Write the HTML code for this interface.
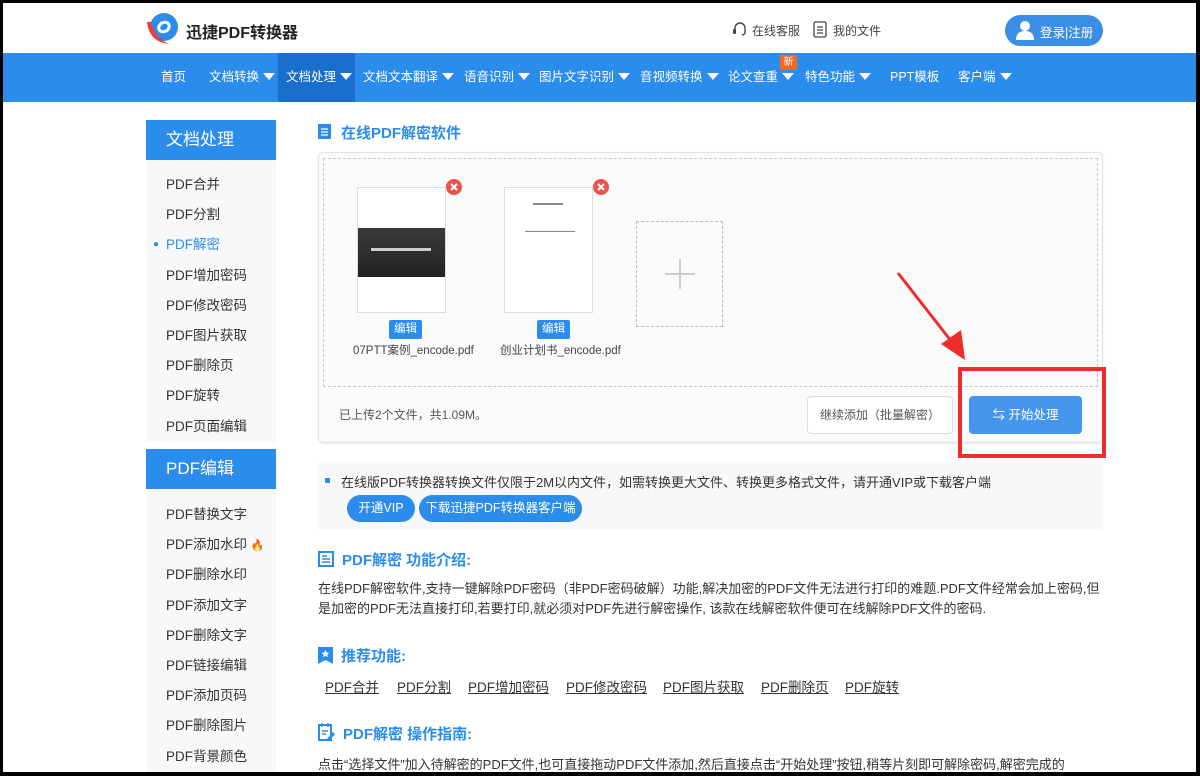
<!DOCTYPE html>
<html><head><meta charset="utf-8">
<style>
*{margin:0;padding:0;box-sizing:border-box}
body{width:1200px;height:776px;overflow:hidden;background:#000;font-family:"Liberation Sans","Noto Sans CJK SC",sans-serif;font-size:13px;color:#333;position:relative}
.page{position:absolute;left:3px;top:3px;width:1193px;height:769px;background:#fff;overflow:hidden}
.abs{position:absolute}
.nav{position:absolute;left:0;top:50px;width:1193px;height:49px;background:#2b8ceb}
.nav span{position:absolute;top:0;height:49px;line-height:49px;color:#fff;font-size:12.5px;white-space:nowrap}
.tri{display:inline-block;width:0;height:0;border-left:6px solid transparent;border-right:6px solid transparent;border-top:7px solid #fff;margin-left:4px;vertical-align:1px}
.side{position:absolute;left:143px;width:130px;background:#f7f8fa}
.sh{height:40px;line-height:40px;background:#2b8ceb;color:#fff;font-size:17px;padding-left:20px}
.si{height:30.2px;line-height:30px;padding-left:20px;font-size:13.5px;color:#333}
.blue{color:#2b8ceb}
.h{position:absolute;font-size:15px;font-weight:bold;color:#2b8ceb}
.p{position:absolute;left:315px;font-size:13px;color:#333;line-height:20px}
.lk{position:absolute;top:673px;font-size:13.5px;color:#333;text-decoration:underline}
.btn{position:absolute;background:#2b8ceb;color:#fff;border-radius:14px;height:27px;line-height:27px;text-align:center;font-size:12.5px}
</style></head><body>
<div class="page">
<svg class="abs" style="left:142px;top:9px" width="36" height="36" viewBox="0 0 36 36"><circle cx="19" cy="15" r="14" fill="#2b8ceb"/><ellipse cx="19" cy="15" rx="7" ry="6" fill="#fff" transform="rotate(-30 19 15)"/><ellipse cx="19" cy="15" rx="4" ry="3" fill="#2b8ceb" transform="rotate(-30 19 15)"/><path d="M2 10 Q4 30 24 32 Q10 26 6 10Z" fill="#e8413a"/></svg>
<div class="abs" style="left:183px;top:16px;font-size:16px;font-weight:bold;color:#222">迅捷PDF转换器</div>
<svg class="abs" style="left:729px;top:18px" width="16" height="18" viewBox="0 0 16 18"><path d="M3 9 V7 a5 5 0 0 1 10 0 V11 a3 3 0 0 1 -3 3" fill="none" stroke="#444" stroke-width="1.4"/><rect x="1" y="8" width="3" height="5" rx="1" fill="#444"/></svg>
<div class="abs" style="left:749px;top:19px;font-size:12px;color:#444">在线客服</div>
<svg class="abs" style="left:810px;top:18px" width="14" height="17" viewBox="0 0 14 17"><rect x="1" y="1" width="12" height="15" rx="1.5" fill="none" stroke="#444" stroke-width="1.3"/><path d="M4 6h6M4 9h6M4 12h6" stroke="#444" stroke-width="1.2"/></svg>
<div class="abs" style="left:830px;top:19px;font-size:12px;color:#444">我的文件</div>
<div class="abs" style="left:1002px;top:12px;width:98px;height:31px;border-radius:16px;background:#3a8ee6"></div>
<svg class="abs" style="left:1013px;top:17px" width="18" height="20" viewBox="0 0 18 20"><circle cx="9" cy="6" r="5" fill="#fff"/><path d="M0 20 Q0 11 9 11 Q18 11 18 20Z" fill="#fff"/></svg>
<div class="abs" style="left:1037px;top:19px;font-size:12.5px;color:#fff">登录|注册</div>
<div class="nav">
<div class="abs" style="left:275px;top:0;width:77px;height:49px;background:#1a6fcc"></div>
<span style="left:158px">首页</span>
<span style="left:206px">文档转换<i class="tri"></i></span>
<span style="left:283px">文档处理<i class="tri"></i></span>
<span style="left:360px">文档文本翻译<i class="tri"></i></span>
<span style="left:461px">语音识别<i class="tri"></i></span>
<span style="left:536px">图片文字识别<i class="tri"></i></span>
<span style="left:637px">音视频转换<i class="tri"></i></span>
<span style="left:725px">论文查重<i class="tri"></i></span>
<span style="left:802px">特色功能<i class="tri"></i></span>
<span style="left:887px">PPT模板</span>
<span style="left:955px">客户端<i class="tri"></i></span>
</div>
<div class="abs" style="left:777px;top:52px;width:17px;height:15px;background:#f06a23;color:#fff;font-size:10px;text-align:center;line-height:15px">新</div>
<div class="side" style="top:117px;height:322px">
<div class="sh">文档处理</div>
<div style="height:10px"></div>
<div class="si">PDF合并</div><div class="si">PDF分割</div>
<div class="si blue" style="position:relative"><span style="position:absolute;left:7px;top:0;font-size:10px">●</span>PDF解密</div>
<div class="si">PDF增加密码</div><div class="si">PDF修改密码</div><div class="si">PDF图片获取</div><div class="si">PDF删除页</div><div class="si">PDF旋转</div><div class="si">PDF页面编辑</div>
</div>
<div class="side" style="top:446px;height:330px">
<div class="sh">PDF编辑</div>
<div style="height:11px"></div>
<div class="si">PDF替换文字</div><div class="si">PDF添加水印 <span style="color:#f06a23;font-size:11px">🔥</span></div><div class="si">PDF删除水印</div><div class="si">PDF添加文字</div><div class="si">PDF删除文字</div><div class="si">PDF链接编辑</div><div class="si">PDF添加页码</div><div class="si">PDF删除图片</div><div class="si">PDF背景颜色</div>
</div>
<svg class="abs" style="left:315px;top:121px" width="13" height="15" viewBox="0 0 13 15"><rect width="13" height="15" fill="#2b8ceb"/><path d="M3 5h7M3 8h7M3 11h7" stroke="#fff" stroke-width="1.3"/></svg>
<div class="h" style="left:338px;top:119px">在线PDF解密软件</div>
<div class="abs" style="left:315px;top:149px;width:785px;height:291px;border:1px solid #e3e3e3;border-radius:5px;background:#fafafa;box-shadow:0 1px 3px rgba(0,0,0,.08)"></div>
<div class="abs" style="left:320px;top:155px;width:775px;height:229px;border:1px dashed #c8c8c8"></div>
<div class="abs" style="left:354px;top:184px;width:89px;height:126px;background:#fff;border:1px solid #ddd"></div>
<div class="abs" style="left:355px;top:225px;width:87px;height:49px;background:linear-gradient(#3a3a3a,#222)"></div>
<div class="abs" style="left:368px;top:245px;width:60px;height:3px;background:#ccc"></div>
<div class="abs" style="left:501px;top:184px;width:89px;height:126px;background:#fff;border:1px solid #ddd"></div>
<div class="abs" style="left:530px;top:200px;width:30px;height:2px;background:#888"></div>
<div class="abs" style="left:522px;top:225px;width:50px;height:4px;border-bottom:1px solid #888"></div>
<svg class="abs" style="left:443px;top:176px" width="16" height="16" viewBox="0 0 16 16"><circle cx="8" cy="8" r="8" fill="#e9534b"/><path d="M5 5l6 6M11 5l-6 6" stroke="#fff" stroke-width="2"/></svg>
<svg class="abs" style="left:590px;top:176px" width="16" height="16" viewBox="0 0 16 16"><circle cx="8" cy="8" r="8" fill="#e9534b"/><path d="M5 5l6 6M11 5l-6 6" stroke="#fff" stroke-width="2"/></svg>
<div class="abs" style="left:386px;top:317px;width:33px;height:19px;background:#2b8ceb;color:#fff;border-radius:2px;font-size:11.5px;text-align:center;line-height:19px">编辑</div>
<div class="abs" style="left:534px;top:317px;width:33px;height:19px;background:#2b8ceb;color:#fff;border-radius:2px;font-size:11.5px;text-align:center;line-height:19px">编辑</div>
<div class="abs" style="left:350px;top:339px;font-size:11.5px;color:#444">07PTT案例_encode.pdf</div>
<div class="abs" style="left:497px;top:339px;font-size:11.5px;color:#444">创业计划书_encode.pdf</div>
<div class="abs" style="left:633px;top:218px;width:87px;height:106px;border:1px dashed #bbb"></div>
<div class="abs" style="left:662px;top:270px;width:30px;height:2px;background:#ccc"></div>
<div class="abs" style="left:676px;top:256px;width:2px;height:30px;background:#ccc"></div>
<div class="abs" style="left:336px;top:403px;font-size:12px;color:#555">已上传2个文件，共1.09M。</div>
<div class="abs" style="left:804px;top:393px;width:146px;height:38px;border:1px solid #ddd;border-radius:4px;background:#fff;text-align:center;line-height:36px;font-size:12px;color:#555">继续添加（批量解密）</div>
<div class="abs" style="left:966px;top:393px;width:113px;height:38px;border-radius:4px;background:#4495ec;text-align:center;line-height:38px;font-size:12.5px;color:#fff">⇆ 开始处理</div>
<div class="abs" style="left:955px;top:364px;width:148px;height:91px;border:4px solid #ef2b2b"></div>
<svg class="abs" style="left:890px;top:265px" width="80" height="95" viewBox="0 0 80 95"><path d="M5 5 L62 78" stroke="#ee2c2c" stroke-width="3"/><path d="M48 76 L72 92 L68 62Z" fill="#ee2c2c"/></svg>
<div class="abs" style="left:315px;top:459px;width:785px;height:67px;background:#f7f8fa"></div>
<div class="abs" style="left:322px;top:475px;width:5px;height:5px;background:#2b8ceb"></div>
<div class="abs" style="left:338px;top:469px;font-size:13px;color:#333">在线版PDF转换器转换文件仅限于2M以内文件，如需转换更大文件、转换更多格式文件，请开通VIP或下载客户端</div>
<div class="btn" style="left:344px;top:492px;width:68px">开通VIP</div>
<div class="btn" style="left:416px;top:492px;width:163px">下载迅捷PDF转换器客户端</div>
<svg class="abs" style="left:315px;top:548px" width="16" height="16" viewBox="0 0 16 16"><rect x="1" y="1" width="14" height="14" fill="none" stroke="#2b8ceb" stroke-width="2"/><path d="M4 5h5M4 8h8M4 11h8" stroke="#2b8ceb" stroke-width="1.5"/></svg>
<div class="h" style="left:339px;top:546px">PDF解密 功能介绍:</div>
<div class="p" style="top:576px">在线PDF解密软件,支持一键解除PDF密码（非PDF密码破解）功能,解决加密的PDF文件无法进行打印的难题.PDF文件经常会加上密码,但<br>是加密的PDF无法直接打印,若要打印,就必须对PDF先进行解密操作, 该款在线解密软件便可在线解除PDF文件的密码.</div>
<svg class="abs" style="left:315px;top:644px" width="15" height="17" viewBox="0 0 15 17"><path d="M0 0h15v17l-7.5-4L0 17Z" fill="#2b8ceb"/><path d="M7.5 3l1.2 2.5 2.6.3-2 1.8.6 2.6-2.4-1.4-2.4 1.4.6-2.6-2-1.8 2.6-.3Z" fill="#fff"/></svg>
<div class="h" style="left:338px;top:642px">推荐功能:</div>
<div class="lk" style="left:322px">PDF合并</div>
<div class="lk" style="left:394px">PDF分割</div>
<div class="lk" style="left:465px">PDF增加密码</div>
<div class="lk" style="left:563px">PDF修改密码</div>
<div class="lk" style="left:660px">PDF图片获取</div>
<div class="lk" style="left:758px">PDF删除页</div>
<div class="lk" style="left:842px">PDF旋转</div>
<svg class="abs" style="left:315px;top:720px" width="17" height="18" viewBox="0 0 17 18"><rect x="1" y="2" width="12" height="15" fill="none" stroke="#2b8ceb" stroke-width="2"/><path d="M4 0v4M10 0v4M4 8h6M4 11h4" stroke="#2b8ceb" stroke-width="1.5"/><path d="M9 16l6-7 2 2-6 7h-2Z" fill="#2b8ceb"/></svg>
<div class="h" style="left:340px;top:720px">PDF解密 操作指南:</div>
<div class="p" style="top:752px">点击“选择文件”加入待解密的PDF文件,也可直接拖动PDF文件添加,然后直接点击“开始处理”按钮,稍等片刻即可解除密码,解密完成的</div>
</div>
</body></html>
